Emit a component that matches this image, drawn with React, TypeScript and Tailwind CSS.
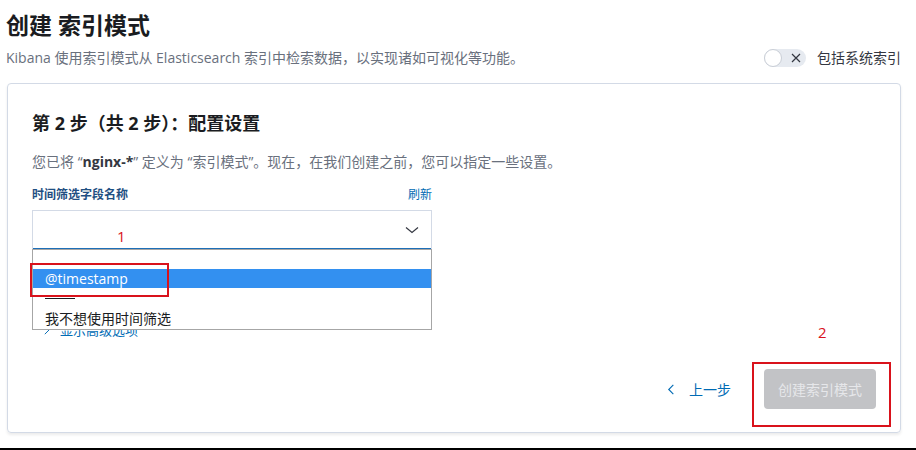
import React from 'react';

const FONT = "font-['Open_Sans','Noto_Sans_CJK_SC',sans-serif]";

const Chevron = ({ className }: { className?: string }) => (
  <svg viewBox="0 0 16 16" className={className} fill="none" stroke="currentColor" strokeWidth="1.2">
    <path d="M2 5.5l6 5 6-5" />
  </svg>
);

const Toggle = () => (
  <div className="flex items-center gap-[11px]">
    <div className="relative w-[42px] h-[18px] rounded-full bg-[#e6eaf0]">
      <div className="absolute left-0 top-0 w-[18px] h-[18px] rounded-full bg-white border border-[#c9ced6]" />
      <svg viewBox="0 0 10 10" className="absolute left-[27px] top-[4px] w-[10px] h-[10px]" stroke="#343741" strokeWidth="1.2">
        <path d="M1 1l8 8M9 1l-8 8" />
      </svg>
    </div>
    <span className="text-[14px] text-[#343741]">包括系统索引</span>
  </div>
);

export default function App() {
  return (
    <div className={`${FONT} relative w-[916px] h-[450px] bg-white overflow-hidden`}>
      <div className="pl-[6px] pt-[9px]">
        <h1 className="text-[23px] leading-[32px] font-bold text-[#1a1c21]">创建 索引模式</h1>
        <div className="flex items-center justify-between pr-[15px] mt-[6px]">
          <p className="text-[14px] leading-[18px] text-[#69707d]">
            Kibana 使用索引模式从 Elasticsearch 索引中检索数据，以实现诸如可视化等功能。
          </p>
          <Toggle />
        </div>
      </div>

      <div className="ml-[7px] mt-[15px] w-[894px] h-[350px] border border-[#d3dae6] rounded-[4px] shadow-[0_2px_3px_rgba(0,0,0,0.08)] flex flex-col px-[24px] pt-[27px] pb-[23px]">
        <h2 className="text-[18px] leading-[24px] font-bold text-[#1a1c21]">第 2 步（共 2 步）：配置设置</h2>
        <p className="mt-[18px] text-[14px] leading-[18px] text-[#69707d]">
          您已将 “<span className="font-bold text-[#343741]">nginx-*</span>” 定义为 “索引模式”。现在，在我们创建之前，您可以指定一些设置。
        </p>

        <div className="relative w-[400px] mt-[14px]">
          <div className="flex items-center justify-between h-[20px]">
            <span className="text-[12px] font-bold text-[#1f4f82]">时间筛选字段名称</span>
            <span className="text-[12px] text-[#006bb4]">刷新</span>
          </div>
          <div className="mt-[5px] h-[39px] bg-white border border-[#d3dae6] border-b-0 flex items-center justify-end pr-[11px] relative">
            <Chevron className="w-[16px] h-[16px] text-[#343741]" />
            <div className="absolute left-0 right-0 -bottom-[1px] h-[2px] bg-[#1d6fb8]" />
          </div>
          <div className="flex items-center gap-[8px] mt-[72px] pl-[12px] text-[13px] text-[#006bb4]">
            <svg viewBox="0 0 10 10" className="w-[8px] h-[8px]" stroke="currentColor" strokeWidth="1.2">
              <path d="M1 9l8-8" />
            </svg>
            <span>显示高级选项</span>
          </div>

          <div className="absolute left-0 top-[64px] w-[400px] h-[81px] bg-white border border-[#a6a6a6] flex flex-col pt-[19px] text-[14px] text-[#1a1c21]">
            <div className="h-[19px] shrink-0 bg-[#3390f0] text-white pl-[12px] flex items-center">@timestamp</div>
            <div className="h-[20px] shrink-0 pl-[12px] pt-[10px]">
              <div className="w-[30px] border-t border-[#1a1c21]" />
            </div>
            <div className="h-[20px] shrink-0 pl-[12px] flex items-center">我不想使用时间筛选</div>
          </div>
        </div>

        <div className="mt-auto flex items-center justify-end">
          <button className="flex items-center gap-[12px] text-[14px] text-[#006bb4] mr-[33px]">
            <svg viewBox="0 0 12 12" className="w-[11px] h-[11px]" fill="none" stroke="currentColor" strokeWidth="1.2">
              <path d="M8 1L3 6l5 5" />
            </svg>
            上一步
          </button>
          <button className="w-[112px] h-[40px] rounded-[4px] bg-[#c2c3c6] text-[#e6e7ea] text-[14px]">创建索引模式</button>
        </div>
      </div>

      <span className="absolute left-[117px] top-[225px] text-[15px] text-[#d9121b]">1</span>
      <div className="absolute left-[30px] top-[263px] w-[139px] h-[34px] border-2 border-[#d9121b]" />
      <span className="absolute left-[818px] top-[321px] text-[15px] text-[#d9121b]">2</span>
      <div className="absolute left-[752px] top-[362px] w-[139px] h-[65px] border-2 border-[#d9121b]" />
      <div className="absolute left-0 bottom-0 w-full h-[2px] bg-black" />
    </div>
  );
}
